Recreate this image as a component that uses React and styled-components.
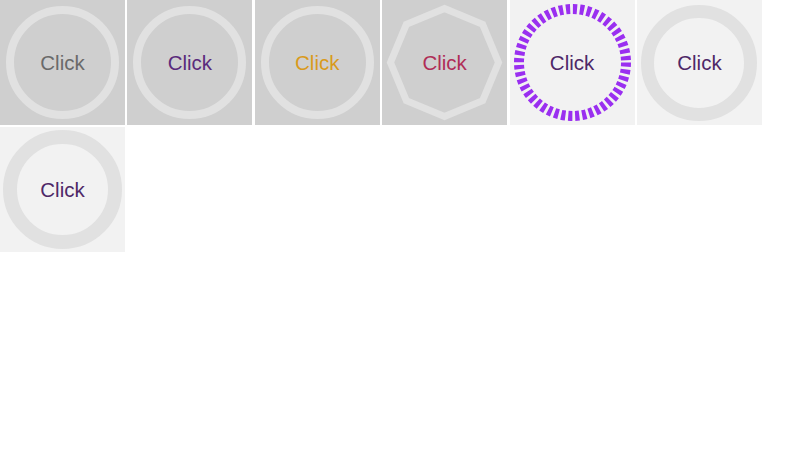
import React from 'react';
import styled, { createGlobalStyle } from 'styled-components';

const Global = createGlobalStyle`
  html, body { margin: 0; padding: 0; background: #fff; }
  body { font-family: "Liberation Sans", Arial, sans-serif; }
`;

const Grid = styled.div`
  display: flex;
  flex-wrap: wrap;
  column-gap: 2.4px;
  row-gap: 2px;
  width: 800px;
`;

const Tile = styled.div`
  position: relative;
  width: 125px;
  height: 125px;
  background: ${p => (p.$light ? '#f2f2f2' : '#cfcfcf')};
  display: flex;
  align-items: center;
  justify-content: center;
  flex-shrink: 0;
`;

const Ring = styled.div`
  box-sizing: border-box;
  width: ${p => p.$size}px;
  height: ${p => p.$size}px;
  border-radius: 50%;
  border: ${p => p.$thick}px solid #e1e1e1;
  display: flex;
  align-items: center;
  justify-content: center;
`;

const Shape = styled.svg`
  position: absolute;
  inset: 0;
  width: 125px;
  height: 125px;
`;

const Label = styled.span`
  position: relative;
  top: 1px;
  font-size: 20.5px;
  color: ${p => p.$color};
  line-height: 1;
`;

const octagon = () => {
  const pts = [];
  const cx = 62.5, cy = 62.5, r = 54;
  for (let i = 0; i < 8; i++) {
    const a = (-90 + i * 45) * Math.PI / 180;
    pts.push(`${(cx + r * Math.cos(a)).toFixed(2)},${(cy + r * Math.sin(a)).toFixed(2)}`);
  }
  return pts.join(' ');
};

const dashR = 53.5;
const dashCirc = 2 * Math.PI * dashR;
const dashCount = 48;
const seg = dashCirc / dashCount;

export default function App() {
  return (
    <>
      <Global />
      <Grid>
        <Tile>
          <Ring $size={113} $thick={8}>
            <Label $color="#6a6a6a">Click</Label>
          </Ring>
        </Tile>
        <Tile>
          <Ring $size={113} $thick={8}>
            <Label $color="#5a2a7c">Click</Label>
          </Ring>
        </Tile>
        <Tile>
          <Ring $size={113} $thick={8}>
            <Label $color="#d99a1c">Click</Label>
          </Ring>
        </Tile>
        <Tile>
          <Shape viewBox="0 0 125 125">
            <polygon points={octagon()} fill="none" stroke="#e1e1e1" strokeWidth="7" strokeLinejoin="miter" />
          </Shape>
          <Label $color="#b02d57">Click</Label>
        </Tile>
        <Tile $light>
          <Shape viewBox="0 0 125 125">
            <circle
              cx="62.5"
              cy="62.5"
              r={dashR}
              fill="none"
              stroke="#9a2ff0"
              strokeWidth="10"
              strokeDasharray={`${seg * 0.6} ${seg * 0.4}`}
            />
          </Shape>
          <Label $color="#4e2868">Click</Label>
        </Tile>
        <Tile $light>
          <Ring $size={116} $thick={13}>
            <Label $color="#4e2868">Click</Label>
          </Ring>
        </Tile>
        <Tile $light>
          <Ring $size={119} $thick={14}>
            <Label $color="#4e2868">Click</Label>
          </Ring>
        </Tile>
      </Grid>
    </>
  );
}
